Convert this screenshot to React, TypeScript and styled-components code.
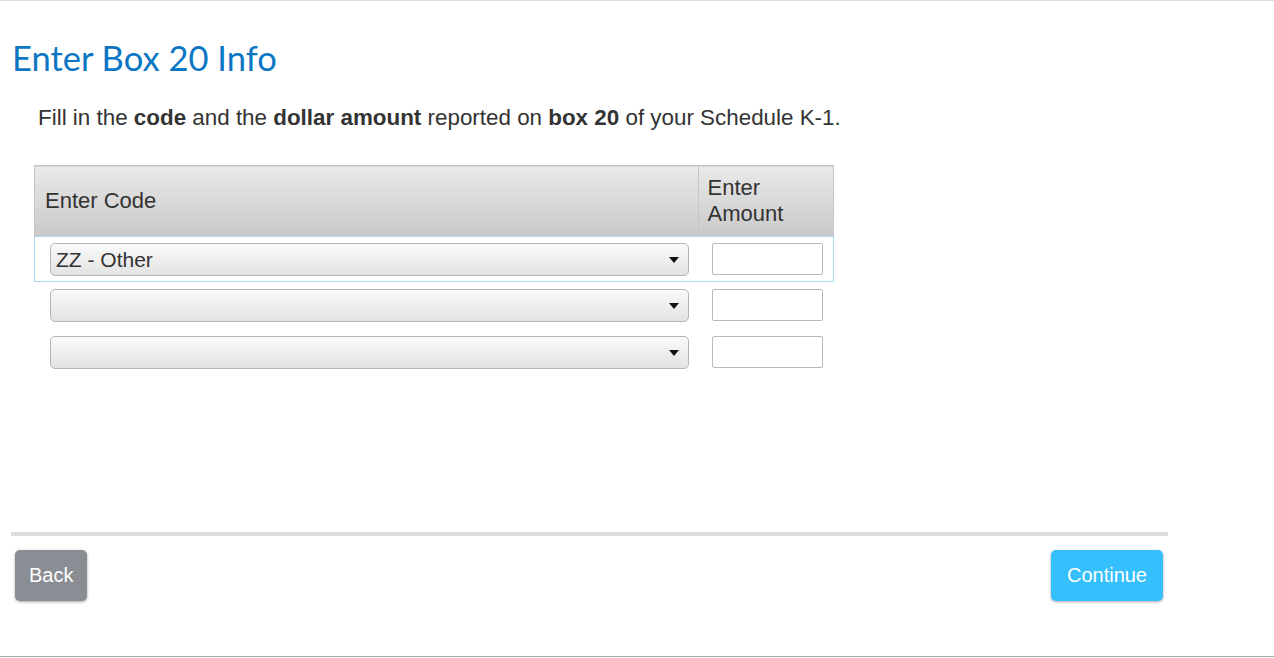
import React from 'react';
import styled, { createGlobalStyle } from 'styled-components';

const GlobalStyle = createGlobalStyle`
  html, body {
    margin: 0;
    padding: 0;
    background: #fff;
  }
  body {
    font-family: "Liberation Sans", Arial, sans-serif;
    color: #333;
  }
`;

const Page = styled.div`
  height: 657px;
  box-sizing: border-box;
  border-top: 1px solid #dcdcdc;
  border-bottom: 1px solid #a8a8a8;
  display: flex;
  flex-direction: column;
`;

const Content = styled.main`
  flex: 1;
  padding: 0 0 0 12px;
`;

const Title = styled.h1`
  margin: 37px 0 0 0;
  font-family: Lato, "Open Sans", sans-serif;
  font-weight: 400;
  font-size: 34.5px;
  line-height: 40px;
  color: #0b76c3;
`;

const Lead = styled.p`
  margin: 27px 0 0 26px;
  font-size: 22.4px;
  line-height: 26px;
  color: #333;
  b {
    font-weight: 700;
  }
`;

const Table = styled.table`
  margin: 34px 0 0 22px;
  width: 800px;
  border-collapse: collapse;
  border: 1px solid #c6c6c6;
`;

const HeadCell = styled.th<{ $narrow?: boolean }>`
  height: 71px;
  padding: 0 0 0 ${p => (p.$narrow ? 9 : 10)}px;
  width: ${p => (p.$narrow ? '136px' : 'auto')};
  text-align: left;
  font-weight: 400;
  font-size: 22px;
  line-height: 26px;
  color: #333;
  background: linear-gradient(#e9e9e9, #c9c9c9);
  border: 1px solid #c6c6c6;
  border-bottom: none;
  box-sizing: border-box;
`;

const Row = styled.tr<{ $active?: boolean }>`
  height: ${p => (p.$active ? 45 : 47)}px;
  td {
    border-top: 1px solid ${p => (p.$active ? '#a9dcf4' : 'transparent')};
    border-bottom: 1px solid ${p => (p.$active ? '#a9dcf4' : 'transparent')};
  }
  td:first-child {
    border-left: 1px solid ${p => (p.$active ? '#a9dcf4' : 'transparent')};
  }
  td:last-child {
    border-right: 1px solid ${p => (p.$active ? '#a9dcf4' : 'transparent')};
  }
`;

const Cell = styled.td<{ $narrow?: boolean }>`
  padding: 0 ${p => (p.$narrow ? '10px 0 14px' : '9px 0 15px')};
  vertical-align: middle;
`;

const SelectWrap = styled.div`
  position: relative;
  width: 639px;
  height: 33px;
`;

const Select = styled.select`
  appearance: none;
  -webkit-appearance: none;
  width: 100%;
  height: 100%;
  box-sizing: border-box;
  padding: 0 30px 0 5px;
  border: 1px solid #b5b5b5;
  border-radius: 5px;
  background: linear-gradient(#fafafa, #e3e3e3);
  font-family: "Liberation Sans", Arial, sans-serif;
  font-size: 21px;
  color: #333;
  outline: none;
`;

const Arrow = styled.span`
  position: absolute;
  right: 10px;
  top: 14px;
  width: 0;
  height: 0;
  border-left: 5px solid transparent;
  border-right: 5px solid transparent;
  border-top: 6px solid #111;
  pointer-events: none;
`;

const AmountInput = styled.input`
  display: block;
  width: 111px;
  height: 32px;
  box-sizing: border-box;
  border: 1px solid #b8b8b8;
  border-radius: 2px;
  background: #fff;
  font-size: 18px;
  outline: none;
`;

const Footer = styled.footer`
  padding: 0 106px 0 11px;
`;

const Divider = styled.hr`
  margin: 0;
  height: 4px;
  border: none;
  background: #dedede;
`;

const Buttons = styled.div`
  display: flex;
  justify-content: space-between;
  padding: 14px 5px 0 4px;
  height: 120px;
  box-sizing: border-box;
`;

const Button = styled.button<{ $primary?: boolean }>`
  height: 51px;
  padding: 0 ${p => (p.$primary ? '16px' : '14px')};
  border: none;
  border-radius: 5px;
  background: ${p => (p.$primary ? '#35c0fd' : '#8a8d94')};
  color: #fff;
  font-family: "Liberation Sans", Arial, sans-serif;
  font-size: 20px;
  box-shadow: 0 1px 3px rgba(0, 0, 0, 0.35);
  cursor: pointer;
`;

const rows = [
  { code: 'ZZ - Other', active: true },
  { code: '', active: false },
  { code: '', active: false },
];

const CodeSelect = ({ value }: { value: string }) => (
  <SelectWrap>
    <Select defaultValue={value}>
      <option value=""></option>
      <option value="ZZ - Other">ZZ - Other</option>
    </Select>
    <Arrow />
  </SelectWrap>
);

export default function App() {
  return (
    <>
      <GlobalStyle />
      <Page>
        <Content>
          <Title>Enter Box 20 Info</Title>
          <Lead>
            Fill in the <b>code</b> and the <b>dollar amount</b> reported on <b>box 20</b> of your Schedule K-1.
          </Lead>
          <Table>
            <thead>
              <tr>
                <HeadCell>Enter Code</HeadCell>
                <HeadCell $narrow>Enter Amount</HeadCell>
              </tr>
            </thead>
            <tbody>
              {rows.map((r, i) => (
                <Row key={i} $active={r.active}>
                  <Cell>
                    <CodeSelect value={r.code} />
                  </Cell>
                  <Cell $narrow>
                    <AmountInput type="text" />
                  </Cell>
                </Row>
              ))}
            </tbody>
          </Table>
        </Content>
        <Footer>
          <Divider />
          <Buttons>
            <Button>Back</Button>
            <Button $primary>Continue</Button>
          </Buttons>
        </Footer>
      </Page>
    </>
  );
}
